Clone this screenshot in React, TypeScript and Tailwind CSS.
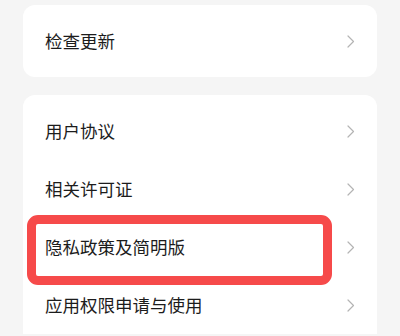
import React from "react";

const Chevron = () => (
  <svg width="8" height="13" viewBox="0 0 8 13" fill="none" className="shrink-0">
    <path d="M1 1 L6.5 6.5 L1 12" stroke="#b4b4b4" strokeWidth="1.2" strokeLinecap="round" strokeLinejoin="round" />
  </svg>
);

const Row = ({ label, highlight }: { label: string; highlight?: boolean }) => (
  <div className="relative h-[58px] flex items-center justify-between pl-[22px] pr-[22px]">
    {highlight && (
      <div className="absolute left-[4px] top-[-3px] w-[305px] h-[70px] border-[9px] border-[#f64a4a] rounded-[11px] pointer-events-none" />
    )}
    <span className="text-[17.5px] text-[#1c1c1c] leading-none">{label}</span>
    <Chevron />
  </div>
);

export default function App() {
  return (
    <div
      className="w-[400px] h-[336px] overflow-hidden bg-[#f5f5f5] pt-[5px]"
      style={{ fontFamily: '"Noto Sans CJK SC", "Noto Sans", sans-serif' }}
    >
      <div className="mx-[23px] h-[72px] bg-white rounded-[12px] flex items-center justify-between pl-[22px] pr-[22px]">
        <span className="text-[17.5px] text-[#1c1c1c] leading-none">检查更新</span>
        <Chevron />
      </div>
      <div className="mx-[23px] mt-[18px] bg-white rounded-t-[12px] pt-[7px]">
        <Row label="用户协议" />
        <Row label="相关许可证" />
        <Row label="隐私政策及简明版" highlight />
        <Row label="应用权限申请与使用" />
      </div>
    </div>
  );
}
